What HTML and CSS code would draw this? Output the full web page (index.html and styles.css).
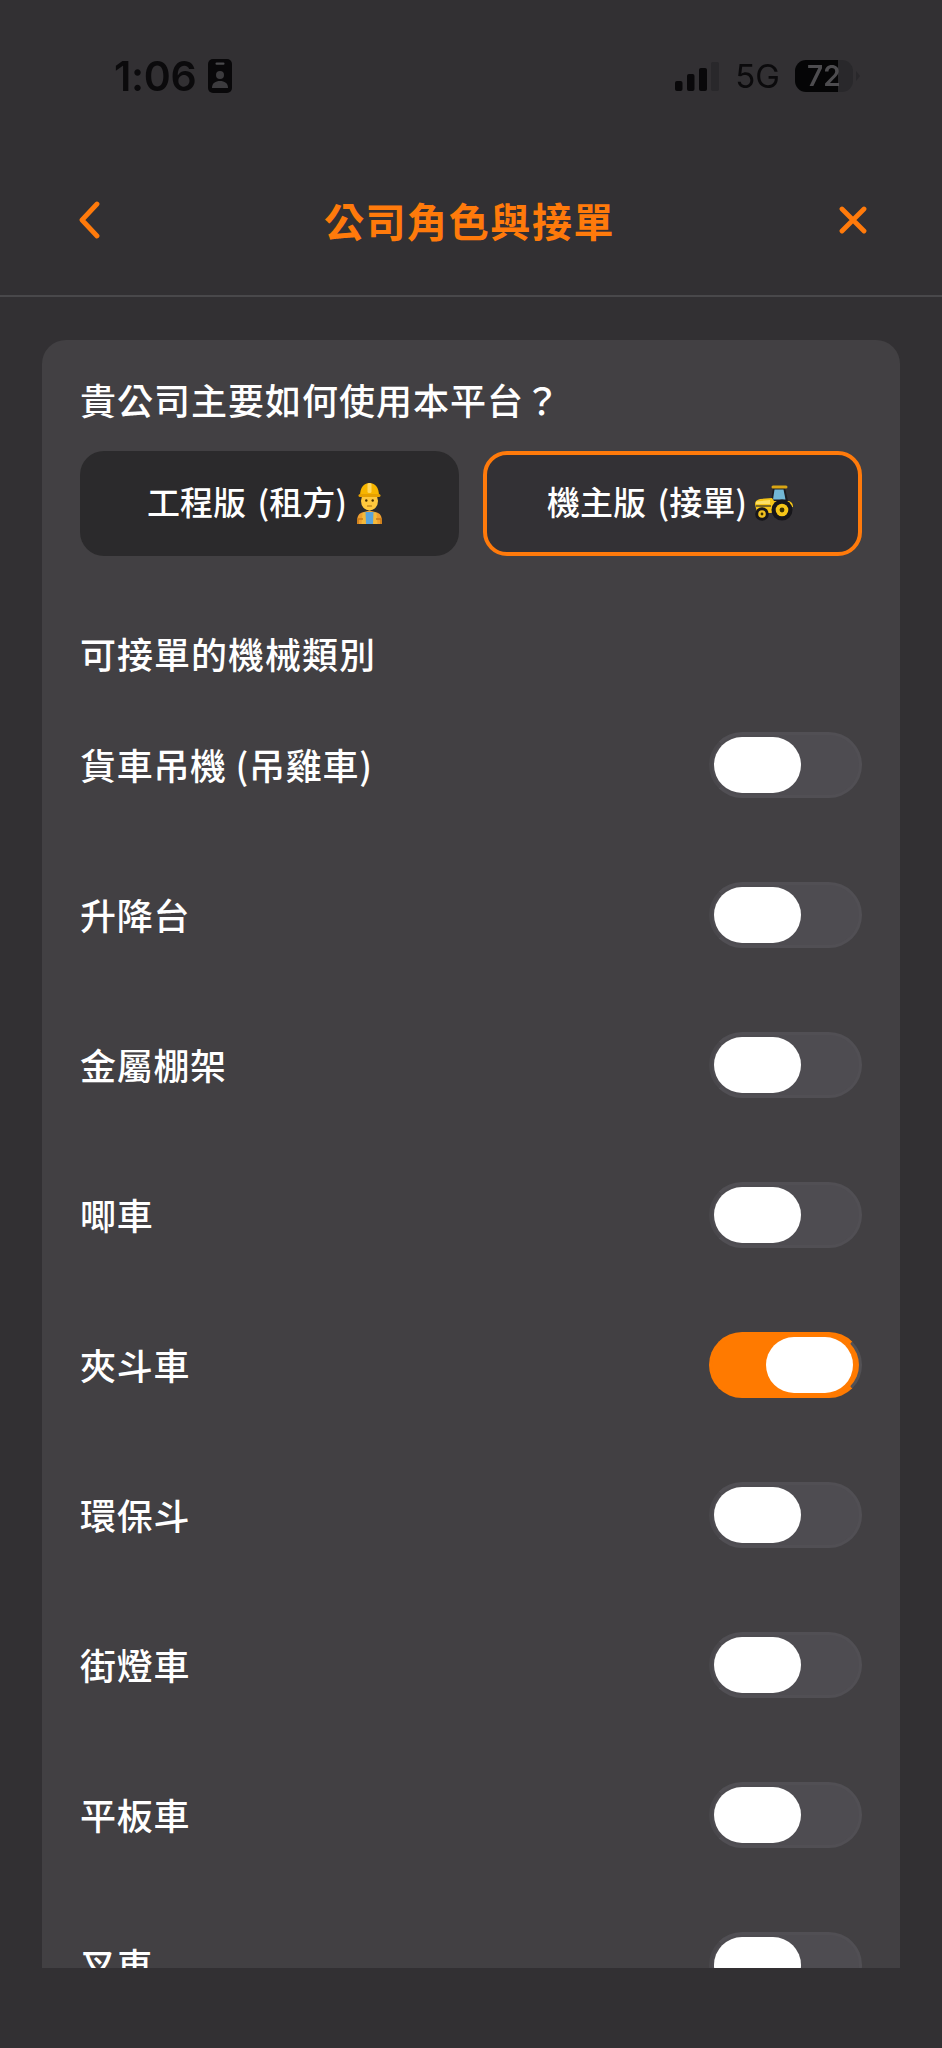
FILE: index.html
```html
<!DOCTYPE html>
<html lang="zh-Hant">
<head>
<meta charset="utf-8">
<title>公司角色與接單</title>
<link rel="stylesheet" href="styles.css">
</head>
<body>
<div class="page">
  <div class="status">
    <div class="status-left">
      <span class="time">1:06</span>
      <svg class="badge" viewBox="0 0 24 34"><rect width="24" height="34" rx="5" fill="#09080a"/><rect x="7.500" y="3.500" width="9" height="2.200" rx="1" fill="#4a494c"/><circle cx="12" cy="16" r="4" fill="#3c3b3e"/><path d="M4 29c0-5 3.500-7 8-7s8 2 8 7z" fill="#3c3b3e"/></svg>
    </div>
    <div class="status-right">
      <svg class="signal" viewBox="0 0 44 29"><rect x="0" y="19" width="7.500" height="10" rx="2" fill="#09080a"/><rect x="12" y="12" width="7.500" height="17" rx="2" fill="#09080a"/><rect x="24" y="6" width="8" height="23" rx="2" fill="#09080a"/><rect x="36" y="0" width="8" height="29" rx="2" fill="#29282b"/></svg>
      <span class="net">5G</span>
      <div class="battery"><span class="level">72</span></div>
      <div class="nub"></div>
    </div>
  </div>

  <header class="nav">
    <svg class="nav-back" viewBox="0 0 22 38"><path d="M19 3 4 19l15 16" fill="none" stroke="#ff7a0b" stroke-width="4.800" stroke-linecap="round" stroke-linejoin="round"/></svg>
    <h1 class="nav-title">公司角色與接單</h1>
    <svg class="nav-close" viewBox="0 0 28 28"><path d="M3 3l22 22M25 3 3 25" fill="none" stroke="#ff7a0b" stroke-width="4.800" stroke-linecap="round"/></svg>
  </header>

  <main class="main">
    <section class="card">
      <h2 class="heading">貴公司主要如何使用本平台？</h2>
      <div class="choices">
        <button class="choice">
          <span class="choice-label">工程版 (租方)</span>
          <svg class="emoji-worker" viewBox="0 0 29 41">
            <path d="M2 41c0-6 .5-10 5-11.500l7.500-2 7.500 2c4.500 1.500 5 5.500 5 11.500z" fill="#f0a030"/>
            <path d="M9 29h11l2 12H7z" fill="#5aa4dc"/>
            <path d="M6.500 41l1-11 3-1 .5 12zM22.500 41l-1-11-3-1-.5 12z" fill="#f5b93a"/>
            <path d="M3 41v-5h5M26 41v-5h-5" fill="none" stroke="#c87a18" stroke-width="1.500"/>
            <ellipse cx="14.500" cy="18" rx="8.500" ry="9.500" fill="#ffc83d"/>
            <circle cx="11.300" cy="17.500" r="1.200" fill="#4a3000"/><circle cx="17.700" cy="17.500" r="1.200" fill="#4a3000"/>
            <path d="M12.500 23h4" stroke="#a86a10" stroke-width="1.200" stroke-linecap="round"/>
            <path d="M5 13C5 5 8.500 0 14.500 0S24 5 24 13z" fill="#f7b500"/>
            <rect x="3.500" y="11" width="22" height="3" rx="1.500" fill="#e6a000"/>
            <rect x="12.500" y="0" width="4" height="10" rx="1.500" fill="#ffd75e"/>
          </svg>
        </button>
        <button class="choice choice-active">
          <span class="choice-label">機主版 (接單)</span>
          <svg class="emoji-tractor" viewBox="0 0 40 36">
            <path d="M19 3h12l3 13H17z" fill="#1e1d20"/>
            <path d="M20.500 4.500h9l2 10H19z" fill="#72b8d6"/>
            <path d="M19 2h13" stroke="#d9a514" stroke-width="3" stroke-linecap="round"/>
            <path d="M1 19c0-3 2-4 5-5l12-1 2 3h15c3 1 4 3 4 6l-10 1-12 5-14 0z" fill="#f5c518"/>
            <path d="M2 16.500l14-1.500v4H2z" fill="#fbe06a"/>
            <path d="M2 21h15" stroke="#2b2a2c" stroke-width="1.200"/>
            <circle cx="8" cy="29" r="6.800" fill="#17161a"/><circle cx="8" cy="29" r="3.800" fill="#f0c020"/><circle cx="8" cy="29" r="1.400" fill="#3a3000"/>
            <circle cx="28" cy="25" r="10.500" fill="#17161a"/><circle cx="28" cy="25" r="6.300" fill="#f5c518"/><circle cx="28" cy="25" r="2.400" fill="#3a3000"/>
          </svg>
        </button>
      </div>

      <h2 class="heading heading-list">可接單的機械類別</h2>
      <ul class="machines">
        <li class="machine"><span>貨車吊機 (吊雞車)</span><div class="toggle"><div class="knob"></div></div></li>
        <li class="machine"><span>升降台</span><div class="toggle"><div class="knob"></div></div></li>
        <li class="machine"><span>金屬棚架</span><div class="toggle"><div class="knob"></div></div></li>
        <li class="machine"><span>唧車</span><div class="toggle"><div class="knob"></div></div></li>
        <li class="machine"><span>夾斗車</span><div class="toggle toggle-on"><div class="knob"></div></div></li>
        <li class="machine"><span>環保斗</span><div class="toggle"><div class="knob"></div></div></li>
        <li class="machine"><span>街燈車</span><div class="toggle"><div class="knob"></div></div></li>
        <li class="machine"><span>平板車</span><div class="toggle"><div class="knob"></div></div></li>
        <li class="machine"><span>叉車</span><div class="toggle"><div class="knob"></div></div></li>
      </ul>
    </section>
  </main>
  <div class="bottom"></div>
</div>
</body>
</html>
```

FILE: styles.css
```css
* { box-sizing: border-box; }
html, body { margin: 0; padding: 0; background: #323033; }
body { font-family: "Noto Sans CJK TC", "Noto Sans", sans-serif; color: #fff; }
.page { width: 942px; height: 2048px; display: flex; flex-direction: column; overflow: hidden; background: #323033; }

.status { height: 152px; flex: none; display: flex; align-items: center; justify-content: space-between; padding: 0 82px 0 114px; color: #0b0a0c; font-family: Inter, "Liberation Sans", sans-serif; filter: blur(0.5px); }
.status-left { display: flex; align-items: center; gap: 12px; }
.time { font-size: 41px; font-weight: 600; line-height: 44px; letter-spacing: -0.3px; }
.badge { width: 24px; height: 34px; display: block; }
.status-right { display: flex; align-items: center; }
.signal { width: 44px; height: 29px; display: block; margin-right: 16px; }
.net { font-size: 33px; line-height: 36px; font-weight: 400; margin-right: 15px; }
.battery { width: 58px; height: 32px; border-radius: 11px; background: linear-gradient(to right, #050506 74%, #29282b 74%); display: flex; align-items: center; padding-left: 12px; }
.level { font-size: 28px; line-height: 32px; font-weight: 600; color: #4d4c4f; }
.nub { width: 0; height: 0; margin-left: 3px; border-left: 4px solid #29282b; border-top: 5px solid transparent; border-bottom: 5px solid transparent; }

.nav { height: 145px; flex: none; display: flex; align-items: center; justify-content: space-between; padding: 0 75px 8px 78px; border-bottom: 2px solid #49484b; }
.nav-back { width: 22px; height: 38px; display: block; }
.nav-close { width: 28px; height: 28px; display: block; }
.nav-title { margin: 0; font-size: 40px; line-height: 50px; font-weight: 700; letter-spacing: 1.6px; color: #ff7a0b; }

.main { flex: 1; min-height: 0; overflow: hidden; padding: 43px 42px 0 42px; }
.card { background: #424043; border-radius: 24px 24px 0 0; padding: 34px 38px 40px 38px; }
.heading { margin: 0; font-size: 36px; line-height: 50px; font-weight: 500; letter-spacing: 1px; color: #fff; }
.choices { display: grid; grid-template-columns: 1fr 1fr; gap: 24px; margin-top: 27px; }
.choice { height: 105px; border: 0; border-radius: 24px; background: #2b2a2c; color: #fff; font: inherit; display: flex; align-items: center; justify-content: center; gap: 8px; padding: 0 8px 0 0; }
.choice-active { background: #333135; border: 4px solid #ff7a0b; gap: 7px; padding: 0 4px 0 0; }
.choice-label { font-size: 33px; line-height: 44px; font-weight: 500; word-spacing: 4px; position: relative; top: -3px; }
.emoji-worker { width: 29px; height: 41px; display: block; }
.emoji-tractor { width: 40px; height: 36px; display: block; margin-top: -2px; }

.heading-list { margin-top: 72px; }
.machines { list-style: none; margin: 12px 0 0; padding: 0; }
.machine { height: 150px; display: flex; align-items: center; justify-content: space-between; font-size: 36px; line-height: 50px; font-weight: 500; letter-spacing: 0.7px; }
.machine span { margin-top: -2px; }
.toggle { width: 153px; height: 66px; border-radius: 33px; background: #4e4c51; border: 3px solid #514f54; border-left-color: #49474b; display: flex; align-items: center; padding-left: 2px; }
.knob { width: 87px; height: 56px; border-radius: 28px; background: #fff; }
.toggle-on { background: #ff7a00; border-color: #ff7a00; border-right-color: #535155; justify-content: flex-end; padding: 0 6px 0 0; }
.bottom { height: 80px; flex: none; background: #323033; }
```
